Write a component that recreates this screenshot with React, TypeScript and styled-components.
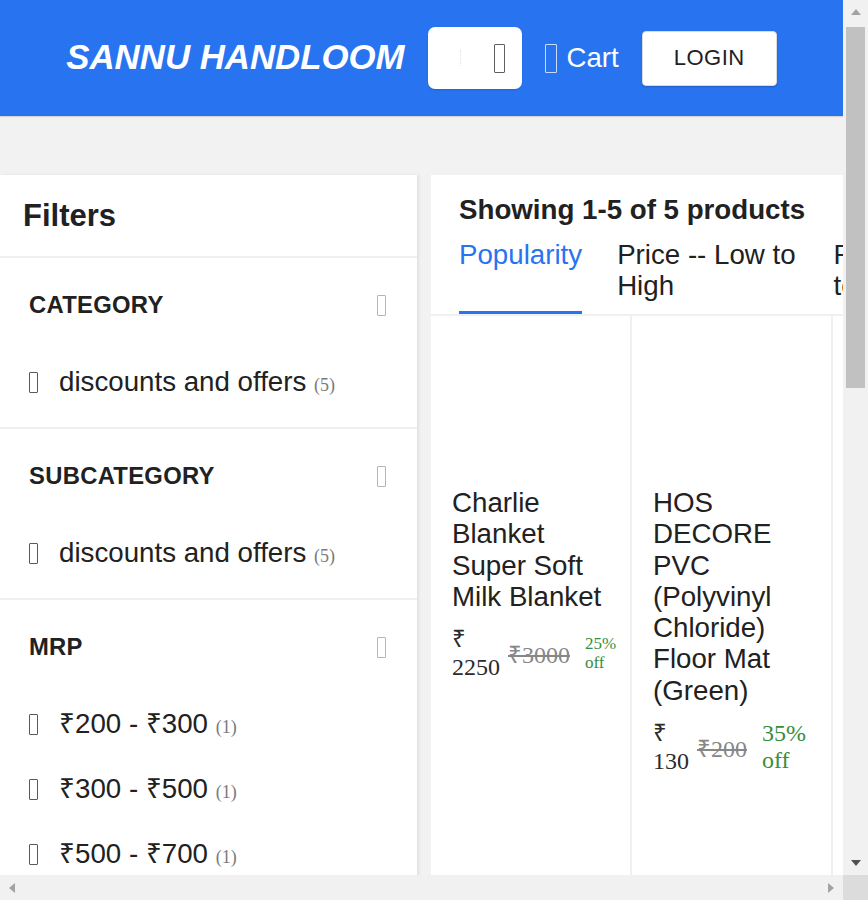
import React from 'react';
import styled, { createGlobalStyle } from 'styled-components';

const GlobalStyle = createGlobalStyle`
  body {
    margin: 0;
    font-family: 'Liberation Sans', Arial, sans-serif;
    color: #212121;
  }
`;

// the reference is a browser window with classic scrollbars, drawn here as a frame
const Frame = styled.div`
  display: grid;
  grid-template-columns: 1fr 25px;
  grid-template-rows: 1fr 25px;
  height: 100vh;
  background: #f1f1f1;
`;

const Viewport = styled.div`
  overflow: hidden;
  background: #f2f2f2;
`;

const VScrollbar = styled.div`
  display: flex;
  flex-direction: column;
  background: #f1f1f1;
`;

const HScrollbar = styled.div`
  display: flex;
  justify-content: space-between;
  background: #f1f1f1;
`;

const ScrollButton = styled.div`
  flex: none;
  width: 25px;
  height: 25px;
  display: flex;
  align-items: center;
  justify-content: center;
`;

const ScrollTrack = styled.div`
  flex: 1;
  padding: 2px 3px 0 3px;
`;

const ScrollThumb = styled.div`
  height: 361px;
  background: #c1c1c1;
`;

const Corner = styled.div`
  background: #dcdcdc;
`;

const Arrow: React.FC<{ dir: 'up' | 'down' | 'left' | 'right'; color: string }> = ({ dir, color }) => {
  const points = {
    up: '1,8 6,2 11,8',
    down: '1,3 11,3 6,9',
    left: '8,1 8,11 2,6',
    right: '3,1 3,11 9,6',
  }[dir];
  return (
    <svg width="12" height="12" viewBox="0 0 12 12">
      <polygon points={points} fill={color} />
    </svg>
  );
};

// missing icon-font glyphs show up as empty boxes in the reference
const Tofu = styled.span<{ tone: string; w?: number; h?: number }>`
  display: inline-block;
  flex: none;
  box-sizing: border-box;
  width: ${(p) => p.w ?? 9}px;
  height: ${(p) => p.h ?? 21}px;
  border: 1.6px solid ${(p) => p.tone};
  border-radius: 1px;
`;

const Page = styled.div`
  min-height: 2000px;
  display: flex;
  flex-direction: column;
`;

const Header = styled.header`
  flex: none;
  height: 116px;
  background: #2874f0;
  box-shadow: 0 1px 1px rgba(0, 0, 0, 0.12);
  display: flex;
  align-items: center;
  justify-content: center;
  gap: 23px;
`;

const Logo = styled.div`
  font-size: 34.8px;
  font-weight: bold;
  font-style: italic;
  color: #fff;
  margin-top: -2px;
`;

const SearchBox = styled.div`
  width: 94px;
  height: 62px;
  box-sizing: border-box;
  background: #fff;
  border-radius: 7px;
  display: flex;
  align-items: center;
  padding-right: 17px;
  box-shadow: 0 1px 2px rgba(0, 0, 0, 0.15);
`;

const SearchInput = styled.input`
  width: 32px;
  height: 16px;
  margin-right: 33px;
  padding: 0;
  border: none;
  border-right: 1px dotted #e2e2e2;
  outline: none;
  background: transparent;
`;

const CartLink = styled.div`
  display: flex;
  align-items: center;
  gap: 10px;
  color: #fff;
  font-size: 27.6px;
`;

const LoginButton = styled.button`
  width: 135px;
  height: 55px;
  background: #fff;
  border: 1px solid #dbdbdb;
  border-radius: 4px;
  font-family: 'Liberation Sans', Arial, sans-serif;
  font-size: 22px;
  letter-spacing: 0.5px;
  color: #212121;
  box-shadow: 0 1px 2px rgba(0, 0, 0, 0.2);
`;

const Main = styled.main`
  flex: 1;
  display: flex;
  gap: 14px;
  padding-top: 59px;
`;

const FilterPanel = styled.aside`
  flex: none;
  width: 417px;
  background: #fff;
  box-shadow: 2px 0 3px rgba(0, 0, 0, 0.07);
`;

const FilterHeading = styled.div`
  padding: 23px;
  font-size: 31px;
  line-height: 35px;
  font-weight: bold;
  border-bottom: 2px solid #f0f0f0;
`;

const Section = styled.section`
  padding: 31px 31px 29px 29px;
  border-bottom: 2px solid #f0f0f0;
`;

const SectionTitle = styled.div`
  display: flex;
  align-items: center;
  justify-content: space-between;
  font-size: 23.8px;
  line-height: 32px;
  font-weight: bold;
  letter-spacing: 0.3px;
`;

const OptionList = styled.div`
  display: flex;
  flex-direction: column;
  gap: 33px;
  margin-top: 45px;
`;

const Option = styled.label`
  display: flex;
  align-items: center;
  gap: 21px;
  height: 32px;
  font-size: 27.7px;
  line-height: 32px;
  color: #212121;
`;

const Count = styled.span`
  font-family: 'Liberation Serif', 'Times New Roman', serif;
  font-size: 18px;
  line-height: 1;
  color: #7a7a7a;
`;

const ProductPanel = styled.div`
  flex: 1;
  min-width: 0;
  overflow: hidden;
  background: #fff;
`;

const ResultCount = styled.div`
  padding: 19px 28px 0;
  font-size: 27.7px;
  line-height: 32px;
  font-weight: bold;
  white-space: nowrap;
`;

const SortTabs = styled.div`
  display: flex;
  gap: 35px;
  padding: 13px 28px 0;
  border-bottom: 2px solid #f0f0f0;
`;

const SortTab = styled.div<{ active?: boolean }>`
  flex: none;
  max-width: 6.55em;
  font-size: 27.7px;
  line-height: 31px;
  padding-bottom: 10px;
  color: ${(p) => (p.active ? '#2874f0' : '#212121')};
  border-bottom: 3px solid ${(p) => (p.active ? '#2874f0' : 'transparent')};
`;

const ProductGrid = styled.div`
  display: grid;
  grid-template-columns: repeat(5, 201px);
`;

const ProductCell = styled.div`
  padding: 21px 20px 40px 21px;
  border-right: 2px solid #f0f0f0;
  min-height: 1400px;
`;

const ProductImage = styled.div`
  height: 150px;
`;

const ProductName = styled.div`
  font-size: 27.7px;
  line-height: 31.3px;
`;

const PriceRow = styled.div`
  display: flex;
  align-items: center;
  margin-top: 13px;
  font-family: 'Liberation Serif', 'Times New Roman', serif;
`;

const Price = styled.span`
  width: min-content;
  font-size: 24px;
  line-height: 28px;
  color: #2b2b2b;
`;

const OldPrice = styled.span`
  margin-left: 8px;
  font-size: 24px;
  color: #878787;
  text-decoration: line-through;
`;

const Discount = styled.span<{ size: number }>`
  width: min-content;
  margin-left: 15px;
  font-size: ${(p) => p.size}px;
  line-height: ${(p) => Math.round(p.size * 1.12)}px;
  color: #388e3c;
`;

const sections = [
  { title: 'CATEGORY', options: [{ label: 'discounts and offers', count: 5 }] },
  { title: 'SUBCATEGORY', options: [{ label: 'discounts and offers', count: 5 }] },
  {
    title: 'MRP',
    options: [
      { label: '₹200 - ₹300', count: 1 },
      { label: '₹300 - ₹500', count: 1 },
      { label: '₹500 - ₹700', count: 1 },
      { label: '₹700 - ₹1000', count: 1 },
      { label: '₹2000 - ₹3000', count: 1 },
    ],
  },
];

const products = [
  { name: 'Charlie Blanket Super Soft Milk Blanket', price: 2250, mrp: 3000, off: 25, offSize: 17 },
  { name: 'HOS DECORE PVC (Polyvinyl Chloride) Floor Mat (Green)', price: 130, mrp: 200, off: 35, offSize: 24 },
  { name: 'Cotton Double Bedsheet with 2 Pillow Covers', price: 499, mrp: 999, off: 50, offSize: 24 },
  { name: 'Handloom Cotton Bath Towel', price: 350, mrp: 500, off: 30, offSize: 24 },
  { name: 'Jaipuri Razai Quilt', price: 525, mrp: 700, off: 25, offSize: 24 },
];

const tabs = ['Popularity', 'Price -- Low to High', 'Price -- High to Low', 'Newest First'];

export default function App() {
  return (
    <Frame>
      <GlobalStyle />
      <Viewport>
        <Page>
          <Header>
            <Logo>SANNU HANDLOOM</Logo>
            <SearchBox>
              <SearchInput aria-label="Search" />
              <Tofu tone="#5f5f5f" w={11} h={29} />
            </SearchBox>
            <CartLink>
              <Tofu tone="rgba(255,255,255,0.75)" w={12} h={29} />
              Cart
            </CartLink>
            <LoginButton>LOGIN</LoginButton>
          </Header>

          <Main>
            <FilterPanel>
              <FilterHeading>Filters</FilterHeading>
              {sections.map((section) => (
                <Section key={section.title}>
                  <SectionTitle>
                    {section.title}
                    <Tofu tone="#b5b5b5" />
                  </SectionTitle>
                  <OptionList>
                    {section.options.map((option) => (
                      <Option key={option.label}>
                        <Tofu tone="#5a5a5a" />
                        <span>
                          {option.label} <Count>({option.count})</Count>
                        </span>
                      </Option>
                    ))}
                  </OptionList>
                </Section>
              ))}
            </FilterPanel>

            <ProductPanel>
              <ResultCount>Showing 1-5 of 5 products</ResultCount>
              <SortTabs>
                {tabs.map((tab, i) => (
                  <SortTab key={tab} active={i === 0}>
                    {tab}
                  </SortTab>
                ))}
              </SortTabs>
              <ProductGrid>
                {products.map((product) => (
                  <ProductCell key={product.name}>
                    <ProductImage />
                    <ProductName>{product.name}</ProductName>
                    <PriceRow>
                      <Price>₹ {product.price}</Price>
                      <OldPrice>₹{product.mrp}</OldPrice>
                      <Discount size={product.offSize}>{product.off}% off</Discount>
                    </PriceRow>
                  </ProductCell>
                ))}
              </ProductGrid>
            </ProductPanel>
          </Main>
        </Page>
      </Viewport>

      <VScrollbar>
        <ScrollButton>
          <Arrow dir="up" color="#a3a3a3" />
        </ScrollButton>
        <ScrollTrack>
          <ScrollThumb />
        </ScrollTrack>
        <ScrollButton>
          <Arrow dir="down" color="#505050" />
        </ScrollButton>
      </VScrollbar>

      <HScrollbar>
        <ScrollButton>
          <Arrow dir="left" color="#a3a3a3" />
        </ScrollButton>
        <ScrollButton>
          <Arrow dir="right" color="#a3a3a3" />
        </ScrollButton>
      </HScrollbar>
      <Corner />
    </Frame>
  );
}
